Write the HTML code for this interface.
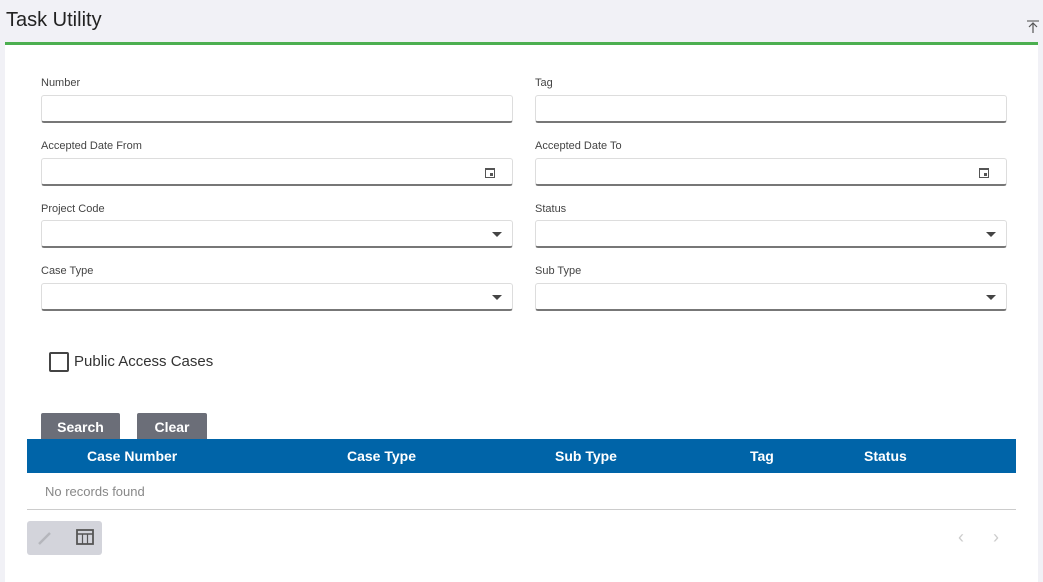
<!DOCTYPE html>
<html><head><style>
body{margin:0;width:1043px;height:574px;background:#f1f1f6;font-family:"Liberation Sans",sans-serif;position:relative;overflow:hidden}
.a{position:absolute}
.title{left:6px;top:9px;font-size:20px;color:#222}
.panel{left:5px;top:42px;width:1033px;height:540px;background:#fff;border-top:3px solid #4caf50;box-sizing:border-box}
.lbl{font-size:11px;color:#444}
.inp{height:28px;width:472px;box-sizing:border-box;border:1px solid #ddd;border-bottom:2px solid #777;border-radius:3px;background:#fff}
.arr{position:absolute;right:10px;top:11px;width:0;height:0;border-left:5px solid transparent;border-right:5px solid transparent;border-top:5px solid #444}
.cal{position:absolute;right:17px;top:9px;width:8px;height:7px;border:1px solid #555;border-top-width:2px}
.cal:after{content:"";position:absolute;right:1px;bottom:1px;width:3px;height:3px;background:#555}
.btn{top:413px;height:26px;background:#6b6e78;color:#fff;font-size:14px;font-weight:bold;text-align:center;line-height:28px;border-radius:2px 2px 0 0}
.th{top:439px;left:27px;width:989px;height:34px;background:#0064a8}
.th span{position:absolute;top:9px;color:#fff;font-size:14px;font-weight:bold}
</style></head><body>
<div class="a title">Task Utility</div>
<svg class="a" style="left:1027px;top:20px" width="12" height="14"><line x1="0" y1="1" x2="12" y2="1" stroke="#666" stroke-width="1.2"/><line x1="6" y1="3" x2="6" y2="13" stroke="#555" stroke-width="1.2"/><polyline points="2,7 6,3 10,7" fill="none" stroke="#555" stroke-width="1.2"/></svg>
<div class="a panel"></div>

<div class="a lbl" style="left:41px;top:77px">Number</div>
<div class="a lbl" style="left:535px;top:77px">Tag</div>
<div class="a inp" style="left:41px;top:95px"></div>
<div class="a inp" style="left:535px;top:95px"></div>

<div class="a lbl" style="left:41px;top:140px">Accepted Date From</div>
<div class="a lbl" style="left:535px;top:140px">Accepted Date To</div>
<div class="a inp" style="left:41px;top:158px"><div class="cal"></div></div>
<div class="a inp" style="left:535px;top:158px"><div class="cal"></div></div>

<div class="a lbl" style="left:41px;top:203px">Project Code</div>
<div class="a lbl" style="left:535px;top:203px">Status</div>
<div class="a inp" style="left:41px;top:220px"><div class="arr"></div></div>
<div class="a inp" style="left:535px;top:220px"><div class="arr"></div></div>

<div class="a lbl" style="left:41px;top:265px">Case Type</div>
<div class="a lbl" style="left:535px;top:265px">Sub Type</div>
<div class="a inp" style="left:41px;top:283px"><div class="arr"></div></div>
<div class="a inp" style="left:535px;top:283px"><div class="arr"></div></div>

<div class="a" style="left:49px;top:352px;width:20px;height:20px;box-sizing:border-box;border:2px solid #444;border-radius:2px"></div>
<div class="a" style="left:74px;top:353px;font-size:15px;color:#333">Public Access Cases</div>

<div class="a btn" style="left:41px;width:79px">Search</div>
<div class="a btn" style="left:137px;width:70px">Clear</div>
<div class="a th">
<span style="left:60px">Case Number</span>
<span style="left:320px">Case Type</span>
<span style="left:528px">Sub Type</span>
<span style="left:723px">Tag</span>
<span style="left:837px">Status</span>
</div>
<div class="a" style="left:45px;top:484px;font-size:13px;color:#888">No records found</div>
<div class="a" style="left:27px;top:509px;width:989px;border-top:1px solid #ccc"></div>
<div class="a" style="left:27px;top:521px;width:75px;height:34px;background:#d3d4db;border-radius:3px"></div>
<svg class="a" style="left:37px;top:530px" width="16" height="16"><line x1="2" y1="14" x2="13" y2="3" stroke="#b5b6bc" stroke-width="2.5"/></svg>
<svg class="a" style="left:76px;top:529px" width="18" height="16"><rect x="1" y="1" width="16" height="14" fill="none" stroke="#555" stroke-width="1.8"/><line x1="1" y1="5" x2="17" y2="5" stroke="#555" stroke-width="1.5"/><line x1="6.5" y1="5" x2="6.5" y2="15" stroke="#555" stroke-width="1.2"/><line x1="11.5" y1="5" x2="11.5" y2="15" stroke="#555" stroke-width="1.2"/></svg>
<div class="a" style="left:958px;top:527px;color:#ccc;font-size:18px">‹</div>
<div class="a" style="left:993px;top:527px;color:#ccc;font-size:18px">›</div>
</body></html>
